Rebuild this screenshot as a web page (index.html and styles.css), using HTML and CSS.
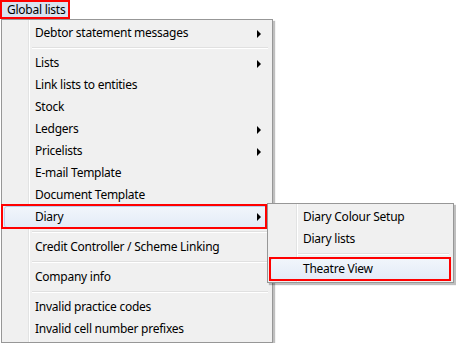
FILE: index.html
```html
<!DOCTYPE html>
<html lang="en">
<head>
    <meta charset="UTF-8">
    <title>Global lists menu</title>
    <link rel="stylesheet" href="styles.css">
</head>
<body>
    <!-- Menu bar -->
    <div class="menubar">
        <div class="bar-item marked">Global lists</div>
    </div>

    <!-- Dropdown -->
    <div class="menu-area">
        <div class="menu main-menu">
            <div class="item has-sub">Debtor statement messages</div>
            <div class="sep"></div>
            <div class="item has-sub">Lists</div>
            <div class="item">Link lists to entities</div>
            <div class="item">Stock</div>
            <div class="item has-sub">Ledgers</div>
            <div class="item has-sub">Pricelists</div>
            <div class="item">E-mail Template</div>
            <div class="item">Document Template</div>
            <div class="item has-sub active diary">Diary</div>
            <div class="sep"></div>
            <div class="item">Credit Controller / Scheme Linking</div>
            <div class="sep"></div>
            <div class="item">Company info</div>
            <div class="sep"></div>
            <div class="item">Invalid practice codes</div>
            <div class="item">Invalid cell number prefixes</div>
        </div>

        <div class="menu sub-menu">
            <div class="item">Diary Colour Setup</div>
            <div class="item">Diary lists</div>
            <div class="sep"></div>
            <div class="item active theatre">Theatre View</div>
        </div>
    </div>
</body>
</html>
```

FILE: styles.css
```css
* {
    box-sizing: border-box;
}

body {
    margin: 0;
    background-color: #ffffff;
    font-family: 'Segoe UI', 'Noto Sans', sans-serif;
    font-size: 12px;
    letter-spacing: -0.25px;
    color: #000000;
    width: 456px;
    height: 343px;
    overflow: hidden;
    white-space: nowrap;
}

/* Menu bar */
.menubar {
    display: flex;
    height: 19px;
}

.bar-item {
    width: 70px;
    height: 19px;
    line-height: 15px;
    padding-left: 5px;
    background-color: #d9e2f0;
}

/* red annotation boxes */
.marked {
    border: 2px solid #ff0000;
}

/* Menus */
.menu-area {
    position: relative;
    padding-left: 1px;
}

.menu {
    background-color: #f0f0f0;
    border: 1px solid #979797;
    padding: 2px;
    box-shadow: 2px 2px 1px rgba(0, 0, 0, 0.25);
    background-image: linear-gradient(to right, transparent 26px, #e2e3e3 26px, #e2e3e3 27px, #ffffff 27px, #ffffff 28px, transparent 28px);
}

.main-menu {
    width: 272px;
}

.sub-menu {
    position: absolute;
    left: 267px;
    top: 184px;
    width: 187px;
    background-image: linear-gradient(to right, transparent 28px, #e2e3e3 28px, #e2e3e3 29px, #ffffff 29px, #ffffff 30px, transparent 30px);
}

.item {
    position: relative;
    height: 22px;
    line-height: 22px;
    padding-left: 31px;
}

.sub-menu .item {
    padding-left: 33px;
}

.has-sub::before {
    content: "";
    position: absolute;
    right: 9px;
    top: 8px;
    border-left: 4px solid #000000;
    border-top: 4px solid transparent;
    border-bottom: 4px solid transparent;
}

.sep {
    height: 8px;
    margin-left: 28px;
    margin-right: 2px;
    background-image: linear-gradient(to bottom, transparent 3px, #e0e0e0 3px, #e0e0e0 4px, #ffffff 4px, #ffffff 5px, transparent 5px);
}

/* Hovered item */
.active {
    background: linear-gradient(to bottom, #f1f5fb, #e3ebf7);
    border: 1px solid #b8d0ef;
    border-radius: 3px;
    padding-left: 30px;
    line-height: 20px;
}

.sub-menu .active {
    padding-left: 32px;
}

.active.has-sub::before {
    right: 8px;
    top: 6px;
}

.active::after {
    content: "";
    position: absolute;
    border: 2px solid #ff0000;
}

.diary::after {
    left: -4px;
    right: 2px;
    top: -3px;
    bottom: -2px;
}

.theatre::after {
    left: -2px;
    right: -1px;
    top: -2px;
    bottom: -2px;
}
```
